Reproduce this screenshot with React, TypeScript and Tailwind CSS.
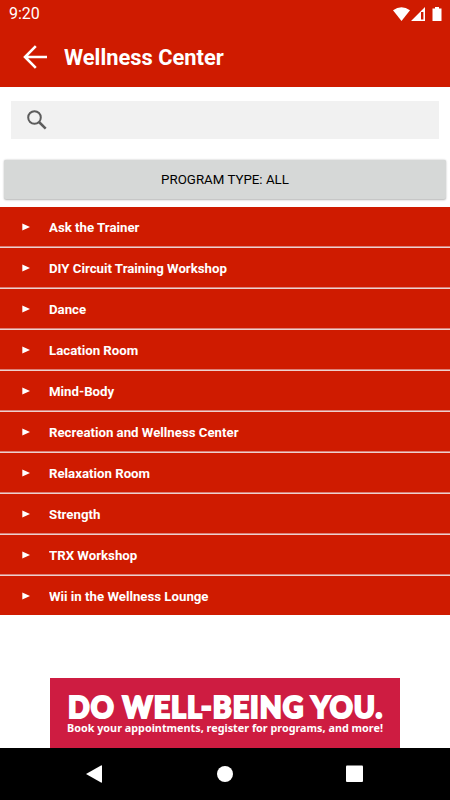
const programs = [
  'Ask the Trainer',
  'DIY Circuit Training Workshop',
  'Dance',
  'Lacation Room',
  'Mind-Body',
  'Recreation and Wellness Center',
  'Relaxation Room',
  'Strength',
  'TRX Workshop',
  'Wii in the Wellness Lounge',
];

function StatusBar() {
  return (
    <div className="flex h-7 items-center justify-between pl-[9px] pr-[8px]">
      <span className="text-[16px] leading-7 text-white">9:20</span>
      <svg width="50" height="16" viewBox="392 5 50 16" fill="#fff">
        <path d="M393 9.300Q401.500 3.200 410 9.300L401.500 20Z" />
        <path fillRule="evenodd" d="M425 6V20H411ZM423.400 11H421V18.500H423.400Z" />
        <path d="M433 7.500h2V6h4v1.500h2.500V20h-9V7.500Z" />
      </svg>
    </div>
  );
}

export default function App() {
  return (
    <div className="flex h-[800px] w-[450px] flex-col overflow-hidden bg-white font-[Roboto,sans-serif]">
      <header className="h-[87px] shrink-0 bg-[#cf1b00]">
        <StatusBar />
        <div className="flex h-[57px] items-center pl-[23px]">
          <svg width="25" height="24" viewBox="0 0 25 24" fill="none" stroke="#fff" strokeWidth="2.600">
            <path d="M24 12H3M12.800 1.200L2 12L12.800 22.800" />
          </svg>
          <h1 className="ml-4 origin-left scale-x-[0.972] pt-[2px] text-[22.500px] font-bold leading-[57px] text-white">Wellness Center</h1>
        </div>
      </header>
      <div className="mx-[11px] mt-[14px] flex h-[38px] shrink-0 items-center bg-[#f1f1f1] pl-4">
        <svg width="20" height="20" viewBox="0 0 20 20" fill="none" stroke="#5c5c5c" strokeWidth="2">
          <circle cx="7.500" cy="7.500" r="6.300" />
          <path d="M12 12L18.700 18.700" strokeWidth="2.500" />
        </svg>
      </div>
      <button className="ml-1 mt-[21px] h-[39px] w-[442px] shrink-0 rounded-[2px] bg-[#d6d8d7] pt-px text-[13.300px] text-black shadow-[0_0.500px_2px_0_rgba(0,0,0,0.3)]">
        PROGRAM TYPE: ALL
      </button>
      <ul className="mt-2 shrink-0">
        {programs.map((name) => (
          <li key={name} className="group h-[41px] bg-[#cf1b00] last:h-[39px]">
            <div className="flex h-[39px] items-center pl-[22px]">
              <svg width="8" height="8" viewBox="0 0 8 8" fill="#fff">
                <path d="M.3 .5L8 4L.3 7.500Z" />
              </svg>
              <span className="ml-[19px] origin-left scale-x-[0.995] pt-[2px] text-[13.300px] font-bold text-white">{name}</span>
            </div>
            <div className="h-px bg-[#dc8077] group-last:hidden" />
            <div className="h-px bg-[#eed0cc] group-last:hidden" />
          </li>
        ))}
      </ul>
      <div className="mx-[50px] mt-[63px] h-[70px] shrink-0 bg-[#ce1c41] pl-[18px] pt-[14px] text-white">
        <div className="h-[30px] w-max origin-left scale-x-[0.932] whitespace-nowrap font-[Lato,sans-serif] text-[30.500px] font-black leading-[29px] tracking-[1.150px] [-webkit-text-stroke:2.200px_white]">
          DO WELL-BEING YOU.
        </div>
        <div className="-ml-px w-max origin-left scale-x-[0.982] whitespace-nowrap font-['Noto_Sans',sans-serif] text-[11px] font-bold leading-[12px]">
          Book your appointments, register for programs, and more!
        </div>
      </div>
      <nav className="flex h-[52px] shrink-0 bg-black">
        <svg width="450" height="52" viewBox="0 0 450 52" fill="#fff">
          <path d="M86 26L101 17.500Q102 17 102 18V34Q102 35 101 34.500Z" />
          <circle cx="225" cy="26" r="8" />
          <rect x="346" y="17.500" width="17" height="16.500" rx="1" />
        </svg>
      </nav>
    </div>
  );
}
